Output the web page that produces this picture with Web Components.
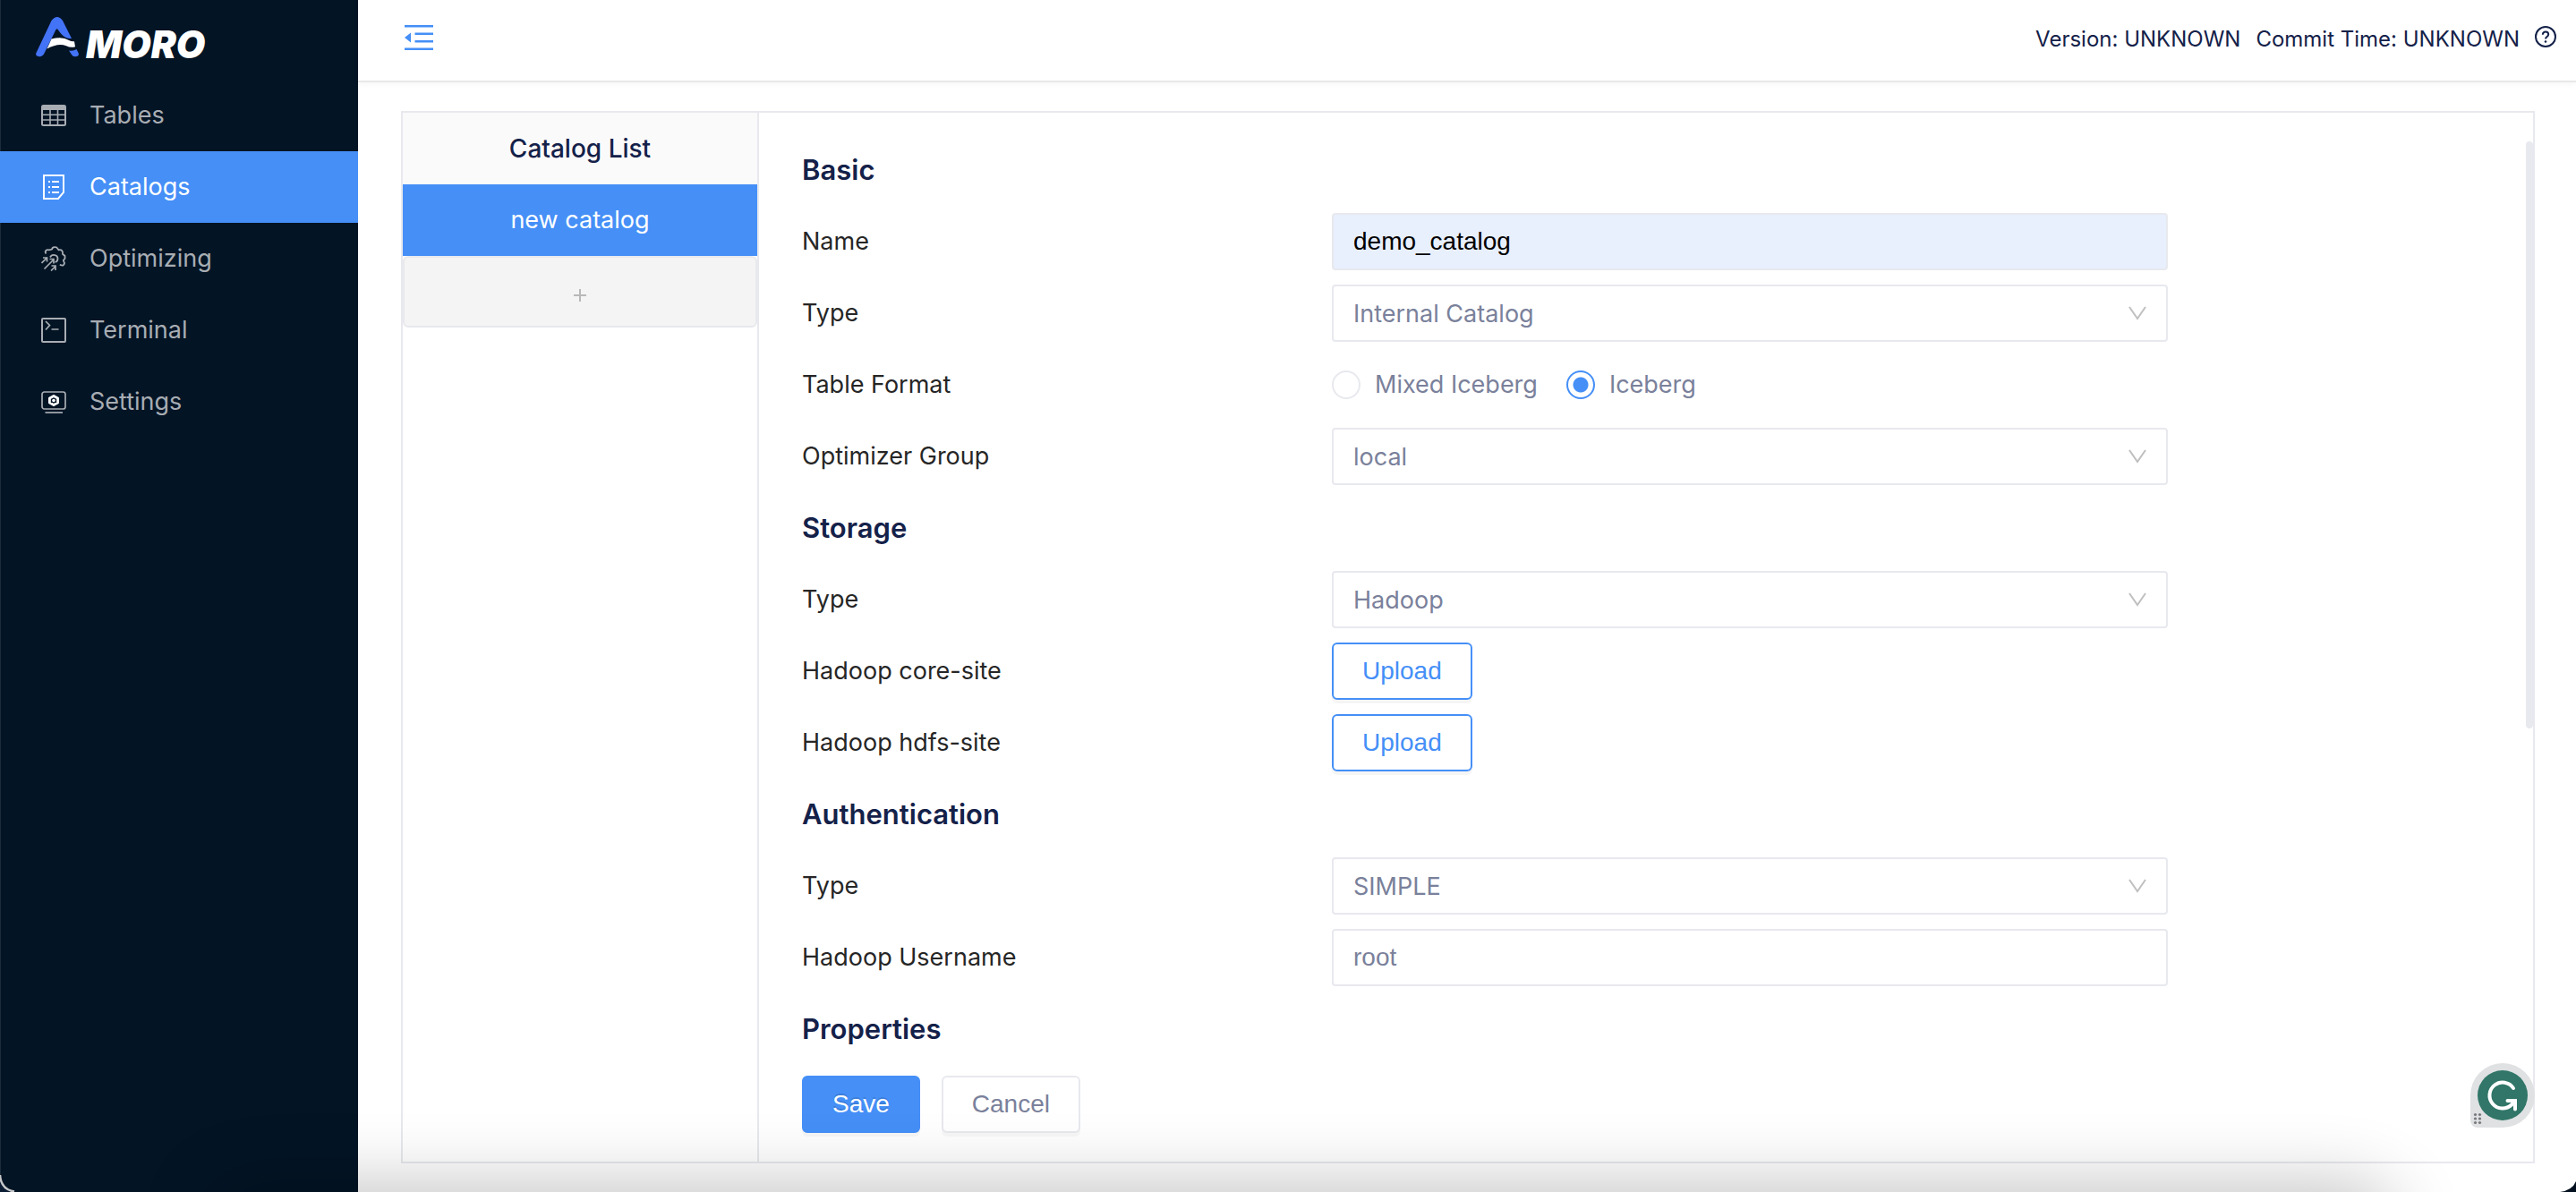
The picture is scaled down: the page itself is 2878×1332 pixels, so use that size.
<!DOCTYPE html>
<html lang="en">
<head>
<meta charset="utf-8">
<title>Amoro - Catalogs</title>
<style>
:root{
  --primary:#458ff7;--line:#e8e9ee;--navy:#142149;--muted:#7a819b;--ink:#262626;--side:#031425;
  --ui:Inter,"Noto Sans",sans-serif;--form:"Liberation Sans",Arial,sans-serif;
}
body{margin:0;background:#fff;font:27px/44px var(--ui);color:var(--ink)}
</style>
</head>
<body>
<amoro-app></amoro-app>
<script>
const define = (name, html) => {
  const tpl = document.createElement('template');
  tpl.innerHTML = html;
  customElements.define(name, class extends HTMLElement {
    constructor(){
      super();
      this.attachShadow({mode:'open'}).append(tpl.content.cloneNode(true));
    }
  });
};

const ICONS = {
  tables:`<rect x="1" y="3" width="26" height="22" rx="1.5"/><path d="M1 5.5H27" stroke-width="5"/><path d="M1 13.3H27M1 19H27M10 7V25M18.500 7V25" stroke-width="1.6"/>`,
  catalogs:`<path d="M3 1H25V20L19 27H3Z"/><path d="M12 8H20M12 14H20M12 20H20M8 8H10M8 14H10M8 20H10"/>`,
  optimizing:`<path d="M5.500 8.500C3.500 6 5.500 3.500 9 4.300L12 3.500C12.500 .5 17.500 .5 18.500 3L19.500 4.300C23 3.300 24.500 6 24 8.800L26.500 11V14L24.800 16L26 19C25.500 22 24 22.300 20.800 20.800" stroke-width="1.8"/><path d="M10 12.500C12 8.500 18.500 9.500 18.500 14C18.500 16 17.500 17.500 15.500 18" stroke-width="1.8"/><path d="M3.500 25.500L14 15M9.500 14.500H14V19.500M.5 19L6.500 13M2 13H6.500V17.500M11 27.500L16.500 22M11.500 22H16V27" stroke-width="1.7"/>`,
  terminal:`<rect x="1" y="1" width="26" height="26" rx="1"/><path d="M5 4L9.500 8.500L5 13.500M11.500 13H19.500" stroke-width="1.7"/>`,
  settings:`<rect x="1" y="3" width="26" height="19" rx="2.500" stroke-width="1.7"/><path d="M4.500 26H24" stroke-width="1.7"/><path d="M14 7.500L18.600 10V15L14 17.500L9.400 15V10Z" stroke="#fff" stroke-width="2.800" stroke-linejoin="round"/><circle cx="14" cy="12.500" r="1.800" fill="#fff" stroke="none"/>`
};

define('amoro-logo', `
<style>
:host{display:flex;align-items:flex-start;height:89px;padding:0 40px;box-sizing:border-box}
svg{display:block;flex:none;margin-top:18px}
span{font:italic 900 42px/48px var(--ui);color:#fff;margin:26px 0 0 8px}
</style>
<svg width="48" height="46" viewBox="40 18 48 46" aria-hidden="true">
<path fill="#4373f6" d="M40.500 59L57.500 23Q64 15 70 23L80 43Q73 43.500 68 37.500L65 33.500Q63.500 31 62 34L50 58.500Q48 63.500 43.500 63.300Q39 62.500 40.500 59Z"/>
<path fill="#fff" d="M57.500 43.500Q70 40.500 77 45Q80 46.800 83 46.200L84 52.200Q79 53.800 74 51.200Q65 47.500 52.500 54.500Z"/>
<path fill="#4373f6" d="M77 56.500Q82 57.500 85.500 55L88 60Q88 63.300 84 63.300Q81 63.300 80 61Z"/>
</svg><span>MORO</span>`);

customElements.define('menu-item', class extends HTMLElement {
  connectedCallback(){
    this.attachShadow({mode:'open'}).innerHTML = `
<style>
:host{display:block}
a{display:flex;align-items:center;gap:26px;height:80px;padding-left:46px;color:#a8adb3;text-decoration:none}
:host([active]) a{background:var(--primary);color:#fff}
svg{fill:none;stroke:currentColor;stroke-width:2;flex:none}
</style>
<a href="#${this.getAttribute('icon')}"><svg width="28" height="28" viewBox="0 0 28 28" aria-hidden="true">${ICONS[this.getAttribute('icon')]}</svg><slot></slot></a>`;
  }
});

define('side-bar', `
<style>
:host{display:block;width:400px;flex:none;box-sizing:border-box;background:var(--side);box-shadow:inset 1px 0 #1c2c3b}
nav{display:block}
</style>
<amoro-logo></amoro-logo>
<nav aria-label="Main">
<menu-item icon="tables">Tables</menu-item>
<menu-item icon="catalogs" active>Catalogs</menu-item>
<menu-item icon="optimizing">Optimizing</menu-item>
<menu-item icon="terminal">Terminal</menu-item>
<menu-item icon="settings">Settings</menu-item>
</nav>`);

define('top-bar', `
<style>
:host{display:flex;align-items:center;justify-content:space-between;height:92px;box-sizing:border-box;padding:0 22px 8px 52px;border-bottom:2px solid #e8e8e8;box-shadow:0 2px 6px rgba(0,0,0,.04);color:var(--navy);font-size:24px}
button{border:0;background:none;padding:0;color:inherit;display:block}
.fold{padding-top:4px}
svg{display:block}
.info{display:flex;align-items:center;gap:17px}
.info span{padding-top:6px}
</style>
<button class="fold" aria-label="Collapse menu"><svg width="32" height="32" viewBox="0 0 32 32" fill="none" stroke="#458ff7" stroke-width="2.600"><path d="M0 2.300H32M11.500 10.700H32M11.500 19.300H32M0 27.800H32"/><path fill="#458ff7" stroke="none" d="M0 15L7 9.500V20.500Z"/></svg></button>
<div class="info"><span>Version: UNKNOWN</span><span>Commit Time: UNKNOWN</span>
<button aria-label="Help"><svg width="24" height="24" viewBox="0 0 24 24" fill="none" stroke="currentColor" stroke-width="2"><circle cx="12" cy="12" r="11"/><path d="M8.800 9.700C8.800 5.500 15.200 5.700 15.200 9.600C15.200 12 12 12 12 14.500"/><circle cx="12" cy="17.500" r="1.300" fill="currentColor" stroke="none"/></svg></button></div>`);

define('catalog-list', `
<style>
:host{display:block;width:396px;flex:none;border-right:2px solid var(--line);text-align:center}
h2,.item,.add{height:80px;line-height:80px;margin:0;font-size:27px;box-sizing:border-box;width:100%;display:block;padding:0}
h2{background:#fafafa;color:var(--navy);font-size:28px;font-weight:500}
.item{border:0;background:var(--primary);color:#fff;font-family:inherit}
.add{border:2px solid var(--line);border-radius:6px;background:#f4f4f4}
svg{display:block;margin:8px auto 0}
</style>
<h2>Catalog List</h2>
<button class="item">new catalog</button>
<button class="add" aria-label="Add catalog"><svg width="16" height="16" viewBox="0 0 16 16" stroke="#b8b8b8" stroke-width="2"><path d="M8 1V15M1 8H15"/></svg></button>`);

customElements.define('form-field', class extends HTMLElement {
  connectedCallback(){
    const kind = this.getAttribute('kind'), value = this.getAttribute('value') || '', label = this.getAttribute('label');
    const control = {
      input:`<input id="c" class="box" type="text" value="${value}">`,
      select:`<select id="c" class="box"><option>${value}</option></select><svg width="20" height="16" viewBox="0 0 20 16" fill="none" stroke="#bfbfbf" stroke-width="2" aria-hidden="true"><path d="M1 1L10 14L19 1"/></svg>`,
      upload:`<button id="c">Upload</button>`,
      radio:`<div class="radios" role="radiogroup" aria-labelledby="l"><label><input type="radio" name="f">Mixed Iceberg</label><label><input type="radio" name="f" checked>Iceberg</label></div>`
    }[kind];
    this.attachShadow({mode:'open'}).innerHTML = `
<style>
:host{display:grid;grid-template-columns:592px 1fr;align-items:center;height:64px}
.control{display:grid;align-items:center}
.box{grid-area:1/1;appearance:none;box-sizing:border-box;width:100%;height:64px;margin:0;padding:0 22px;border:2px solid var(--line);border-radius:4px;background:#fff;color:var(--muted);font:27px var(--ui);outline:0}
input.box{font:28px var(--form)}
:host([autofilled]) .box{background:#e8effd;color:#000}
svg{grid-area:1/1;justify-self:end;margin-right:24px;pointer-events:none}
button{justify-self:start;height:64px;padding:0 32px;border:2px solid var(--primary);border-radius:6px;background:#fff;color:var(--primary);font:28px var(--form);box-shadow:0 4px 0 rgba(0,0,0,.04)}
.radios{display:flex;gap:32px;color:var(--muted)}
.radios label{display:flex;align-items:center;gap:16px}
.radios input{appearance:none;box-sizing:border-box;width:32px;height:32px;margin:0;border:2px solid var(--line);border-radius:50%;background:#fff}
.radios input:checked{border-color:var(--primary);background:radial-gradient(circle,var(--primary) 8px,#fff 9px)}
</style>
${kind === 'radio' ? `<span id="l">${label}</span>` : `<label for="c">${label}</label>`}
<div class="control">${control}</div>`;
  }
});

define('form-title', `
<style>:host{display:block}h3{margin:0;font-size:31px;line-height:64px;font-weight:600;color:var(--navy)}</style>
<h3><slot></slot></h3>`);

define('catalog-form', `
<style>
:host{display:flex;flex-direction:column;flex:1;min-width:0;padding:32px 0;box-sizing:border-box}
.scroll{display:flex;justify-content:space-between;flex:none}
.fields{flex:1;display:grid;gap:16px;padding:0 400px 0 48px}
.thumb{width:8px;height:656px;border-radius:4px;background:var(--line)}
.actions{display:flex;gap:24px;padding:20px 48px 0}
button{height:64px;padding:0 32px;border:2px solid var(--line);border-radius:6px;background:#fff;color:var(--muted);font:28px var(--form);box-shadow:0 4px 0 rgba(0,0,0,.03)}
.save{background:var(--primary);border-color:var(--primary);color:#fff;text-shadow:0 -2px 0 rgba(0,0,0,.12)}
</style>
<div class="scroll"><div class="fields">
<form-title>Basic</form-title>
<form-field kind="input" label="Name" value="demo_catalog" autofilled></form-field>
<form-field kind="select" label="Type" value="Internal Catalog"></form-field>
<form-field kind="radio" label="Table Format"></form-field>
<form-field kind="select" label="Optimizer Group" value="local"></form-field>
<form-title>Storage</form-title>
<form-field kind="select" label="Type" value="Hadoop"></form-field>
<form-field kind="upload" label="Hadoop core-site"></form-field>
<form-field kind="upload" label="Hadoop hdfs-site"></form-field>
<form-title>Authentication</form-title>
<form-field kind="select" label="Type" value="SIMPLE"></form-field>
<form-field kind="input" label="Hadoop Username" value="root"></form-field>
<form-title>Properties</form-title>
</div><div class="thumb"></div></div>
<div class="actions"><button class="save">Save</button><button>Cancel</button></div>`);

define('writing-badge', `
<style>:host{position:fixed;right:46px;bottom:72px;z-index:3}button{border:0;padding:0;background:none;display:block}svg{display:block}</style>
<button aria-label="Writing assistant"><svg width="72" height="72" viewBox="0 0 72 72">
<path fill="#dfe1e3" d="M36 0A36 36 0 0 1 36 72H8A8 8 0 0 1 0 64V36A36 36 0 0 1 36 0Z"/>
<circle cx="36" cy="36" r="28" fill="#317668"/>
<path d="M48 28A14.500 14.500 0 1 0 46 46.500L50 42M41.500 42H50V51.500" fill="none" stroke="#fff" stroke-width="4" stroke-linecap="round" stroke-linejoin="miter"/>
<g fill="#77797c"><circle cx="5.500" cy="57.500" r="1.600"/><circle cx="10.500" cy="57.500" r="1.600"/><circle cx="5.500" cy="62" r="1.600"/><circle cx="10.500" cy="62" r="1.600"/><circle cx="5.500" cy="66.500" r="1.600"/><circle cx="10.500" cy="66.500" r="1.600"/></g>
</svg></button>`);

define('window-edge', `
<style>
:host{position:fixed;inset:0;overflow:hidden;pointer-events:none;z-index:2}
.shade{position:absolute;left:240px;right:210px;top:100%;height:80px;border-radius:40px;box-shadow:0 0 80px 8px rgba(0,0,0,.24)}
svg{position:absolute;bottom:0}
.l{left:0}.r{right:0}
</style>
<div class="shade"></div>
<svg class="l" width="20" height="20" viewBox="0 0 20 20"><path fill="#0c1c33" d="M0 0Q1 18 18 20H0Z"/><path d="M0 1Q1 17 16 19.500" fill="none" stroke="#c6c8ca" stroke-width="2.500"/></svg>
<svg class="r" width="20" height="20" viewBox="0 0 20 20"><path fill="#03101f" d="M20 8Q16 18 2 20H20Z"/></svg>`);

define('amoro-app', `
<style>
:host{display:flex;min-height:100vh}
.page{flex:1;min-width:0;display:flex;flex-direction:column}
main{flex:1;display:flex;padding:32px 46px 32px 48px}
section{flex:1;display:flex;min-width:0;border:2px solid var(--line)}
</style>
<side-bar></side-bar>
<div class="page"><top-bar></top-bar><main><section><catalog-list></catalog-list><catalog-form></catalog-form></section></main></div>
<window-edge></window-edge><writing-badge></writing-badge>`);
</script>
</body>
</html>
